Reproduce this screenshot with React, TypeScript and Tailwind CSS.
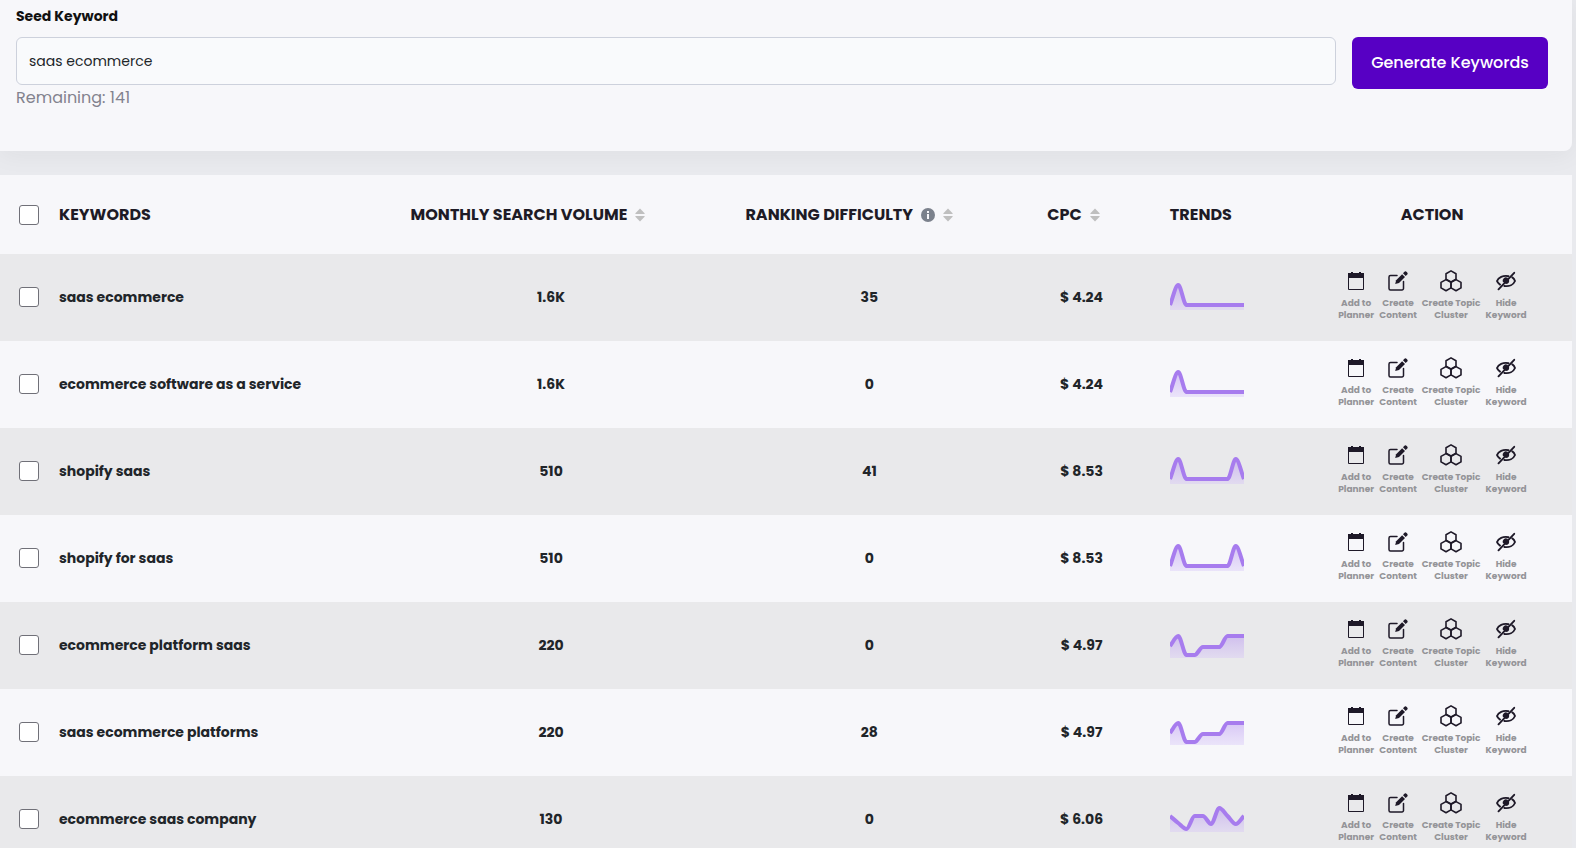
import React from 'react';

interface KeywordRow {
  keyword: string;
  volume: string;
  difficulty: number;
  cpc: string;
  trend: number[];
}

const TREND_START_PEAK = [24, 4, 24, 24, 24, 24, 24, 24, 24, 24];
const TREND_TWO_PEAKS = [24, 4, 24, 24, 24, 24, 24, 24, 4, 24];
const TREND_STEPS = [17, 7, 26, 26, 18, 18, 18, 7, 7, 7];
const TREND_WAVES = [13, 20, 26, 13, 13, 21, 5, 13, 21, 13];

const rows: KeywordRow[] = [
  { keyword: 'saas ecommerce', volume: '1.6K', difficulty: 35, cpc: '$ 4.24', trend: TREND_START_PEAK },
  { keyword: 'ecommerce software as a service', volume: '1.6K', difficulty: 0, cpc: '$ 4.24', trend: TREND_START_PEAK },
  { keyword: 'shopify saas', volume: '510', difficulty: 41, cpc: '$ 8.53', trend: TREND_TWO_PEAKS },
  { keyword: 'shopify for saas', volume: '510', difficulty: 0, cpc: '$ 8.53', trend: TREND_TWO_PEAKS },
  { keyword: 'ecommerce platform saas', volume: '220', difficulty: 0, cpc: '$ 4.97', trend: TREND_STEPS },
  { keyword: 'saas ecommerce platforms', volume: '220', difficulty: 28, cpc: '$ 4.97', trend: TREND_STEPS },
  { keyword: 'ecommerce saas company', volume: '130', difficulty: 0, cpc: '$ 6.06', trend: TREND_WAVES },
];

const CHART_WIDTH = 74;
const CHART_HEIGHT = 29;

// Monotone cubic path through evenly spaced points
function trendPath(values: number[]) {
  const step = CHART_WIDTH / (values.length - 1);
  const slopes = values.slice(1).map((v, i) => (v - values[i]) / step);
  const tangents = values.map((_, i) => {
    if (i === 0) return slopes[0];
    if (i === values.length - 1) return slopes[slopes.length - 1];
    const a = slopes[i - 1];
    const b = slopes[i];
    return a * b <= 0 ? 0 : (2 * a * b) / (a + b);
  });

  let d = `M0 ${values[0]}`;
  for (let i = 1; i < values.length; i++) {
    const x0 = (i - 1) * step;
    const x1 = i * step;
    const h = step / 3;
    d += ` C${x0 + h} ${values[i - 1] + tangents[i - 1] * h} ${x1 - h} ${values[i] - tangents[i] * h} ${x1} ${values[i]}`;
  }
  return d;
}

function TrendChart({ values, id }: { values: number[]; id: string }) {
  const line = trendPath(values);
  return (
    <svg width={CHART_WIDTH} height={CHART_HEIGHT} viewBox={`0 0 ${CHART_WIDTH} ${CHART_HEIGHT}`} className="block overflow-hidden">
      <defs>
        <linearGradient id={id} x1="0" y1="0" x2="0" y2={CHART_HEIGHT} gradientUnits="userSpaceOnUse">
          <stop offset="0" stopColor="#a77cee" stopOpacity="0.5" />
          <stop offset="1" stopColor="#d3c0f8" stopOpacity="0.35" />
        </linearGradient>
      </defs>
      <path d={`${line} V${CHART_HEIGHT} H0 Z`} fill={`url(#${id})`} />
      <path d={line} fill="none" stroke="#a77cee" strokeWidth="4" strokeLinejoin="round" />
    </svg>
  );
}

function SortIcon() {
  return (
    <svg width="10" height="14" viewBox="0 0 10 14" fill="#bfbfbf" className="shrink-0">
      <path d="M5 .5 9.6 5.2Q10 6 9.2 6H.8Q0 6 .4 5.200Z" />
      <path d="M5 13.500 9.600 8.800Q10 8 9.200 8H.8Q0 8 .4 8.800Z" />
    </svg>
  );
}

function InfoIcon() {
  return (
    <svg width="14" height="14" viewBox="0 0 14 14" className="shrink-0">
      <circle cx="7" cy="7" r="7" fill="#7b818c" />
      <path d="M6 3h2v2H6zM6 6h2v5H6z" fill="#f7f7fa" />
    </svg>
  );
}

function CalendarIcon() {
  return (
    <svg width="16" height="20" viewBox="0 0 16 20">
      <path d="M.5 7v11.500h15V7" fill="none" stroke="#1e1928" strokeWidth="1" />
      <path d="M0 2h3V1h2v1h6V1h2v1h3v5H0z" fill="#1e1928" />
    </svg>
  );
}

function EditIcon() {
  return (
    <svg width="20" height="20" viewBox="0 0 20 20" fill="none">
      <path d="M9 4.500H2.500a1.500 1.500 0 0 0-1.500 1.500v11.500a1.500 1.500 0 0 0 1.500 1.500h11.500a1.500 1.500 0 0 0 1.500-1.500V10.500" stroke="#1e1928" strokeWidth="1.500" strokeLinecap="round" />
      <path d="m7.200 13.100.9-3.900 6-6 2.900 2.900-6 6z" fill="#1e1928" />
      <path d="M15 2.300 16.200 1a1.700 1.700 0 0 1 2.500 0l.3.300a1.700 1.700 0 0 1 0 2.500L17.700 5z" fill="#1e1928" />
    </svg>
  );
}

function ClusterIcon() {
  return (
    <svg width="22" height="22" viewBox="0 0 22 22" fill="none" stroke="#1e1928" strokeWidth="1.600" strokeLinejoin="round">
      <path d="M11 .9 16 3.700v5.500l-5 2.800-5-2.800V3.700z" />
      <path d="M6 9.600 11 12.400v5.500l-5 2.800-5-2.800v-5.500z" />
      <path d="M16 9.600 21 12.400v5.500l-5 2.800-5-2.800v-5.500z" />
    </svg>
  );
}

function HideIcon() {
  return (
    <svg width="20" height="20" viewBox="0 0 20 20" fill="none" stroke="#1e1928" strokeWidth="1.900" strokeLinecap="round">
      <path d="M12.500 5.200C7 4 2.300 6.800 1 10c.4 1.300 1.500 2.600 3 3.600" />
      <path d="M16.300 6.400c1.300.9 2.200 2.200 2.700 3.600-1.500 3.600-5.800 5.800-10.700 5" />
      <path d="M13.200 9.600a3.300 3.300 0 0 1-3.300 3.400L6.800 10.800A3.300 3.300 0 0 1 11.500 6.800z" fill="#1e1928" stroke="none" />
      <path d="M2.500 18.300 18.200 1.800" strokeWidth="1.900" />
    </svg>
  );
}

const actions = [
  { first: 'Add to', second: 'Planner', icon: <CalendarIcon />, width: 'w-9' },
  { first: 'Create', second: 'Content', icon: <EditIcon />, width: 'w-9' },
  { first: 'Create Topic', second: 'Cluster', icon: <ClusterIcon />, width: 'w-[58px]' },
  { first: 'Hide', second: 'Keyword', icon: <HideIcon />, width: 'w-10' },
];

const checkboxClass = 'block size-5 appearance-none rounded-[3px] border border-[#707078] bg-white checked:bg-[#5700c4]';

function App() {
  return (
    <div className="h-screen overflow-hidden bg-[#e9eaee] pr-1 font-['Poppins','Inter',sans-serif] text-[#1e1b26]">
      {/* Seed keyword form */}
      <form
        className="rounded-br-lg bg-[#f7f7fa] pt-1 pr-6 pb-10 pl-4 shadow-[0_4px_24px_rgba(34,41,47,0.05)]"
        onSubmit={(e) => e.preventDefault()}
      >
        <label htmlFor="seed" className="block text-sm leading-6 font-bold text-[#111]">
          Seed Keyword
        </label>
        <div className="mt-[9px] flex items-start gap-4">
          <div className="grow">
            <input
              id="seed"
              type="text"
              defaultValue="saas ecommerce"
              className="block h-12 w-full rounded-md border border-[#cdd1dc] bg-[#f9fafc] px-3 text-sm text-[#212529] outline-none"
            />
            <p className="text-base leading-[26px] text-[#82828e]">Remaining: 141</p>
          </div>
          <button type="submit" className="h-13 w-49 shrink-0 rounded-md bg-[#5700c4] text-base font-medium whitespace-nowrap text-white">
            Generate Keywords
          </button>
        </div>
      </form>

      {/* Results */}
      <table className="relative mt-6 w-full table-fixed bg-[#f7f7fa]">
        <colgroup>
          <col className="w-[59px]" />
          <col />
          <col className="w-[21.3%]" />
          <col className="w-[19.2%]" />
          <col className="w-[7.8%]" />
          <col className="w-[9.5%]" />
          <col className="w-[17.8%]" />
        </colgroup>
        <thead>
          <tr className="h-[79px] text-left text-base font-bold whitespace-nowrap">
            <th className="pl-[19px]">
              <input type="checkbox" aria-label="Select all keywords" className={checkboxClass} />
            </th>
            <th>KEYWORDS</th>
            <th className="px-[27px]">
              <button type="button" className="flex items-center gap-2">
                MONTHLY SEARCH VOLUME
                <SortIcon />
              </button>
            </th>
            <th className="px-[27px]">
              <button type="button" className="flex items-center gap-2">
                RANKING DIFFICULTY
                <InfoIcon />
                <SortIcon />
              </button>
            </th>
            <th className="px-[27px]">
              <button type="button" className="flex items-center gap-2">
                CPC
                <SortIcon />
              </button>
            </th>
            <th className="px-[27px]">TRENDS</th>
            <th className="text-center">ACTION</th>
          </tr>
        </thead>
        <tbody>
          {rows.map((row, i) => (
            <tr key={row.keyword} className="h-[87px] text-center text-sm font-bold text-[#212529] odd:bg-[#e9e9eb]">
              <td className="pb-0.5 pl-[19px]">
                <input type="checkbox" aria-label={`Select ${row.keyword}`} className={checkboxClass} />
              </td>
              <td className="pb-0.5 text-left">{row.keyword}</td>
              <td className="pb-0.5">{row.volume}</td>
              <td className="pb-0.5">{row.difficulty}</td>
              <td className="pb-0.5">{row.cpc}</td>
              <td className="px-[27px] pb-1">
                <TrendChart values={row.trend} id={`trend-${i}`} />
              </td>
              <td className="pb-1">
                <div className="flex justify-center gap-[6px]">
                  {actions.map((action) => (
                    <button
                      key={action.second}
                      type="button"
                      className={`flex flex-col items-center gap-[5px] text-[9px] leading-3 font-bold whitespace-nowrap text-[#949498] ${action.width}`}
                    >
                      <span className="flex h-[22px] items-center">{action.icon}</span>
                      <span>
                        {action.first}
                        <br />
                        {action.second}
                      </span>
                    </button>
                  ))}
                </div>
              </td>
            </tr>
          ))}
        </tbody>
      </table>
    </div>
  );
}

export default App;
